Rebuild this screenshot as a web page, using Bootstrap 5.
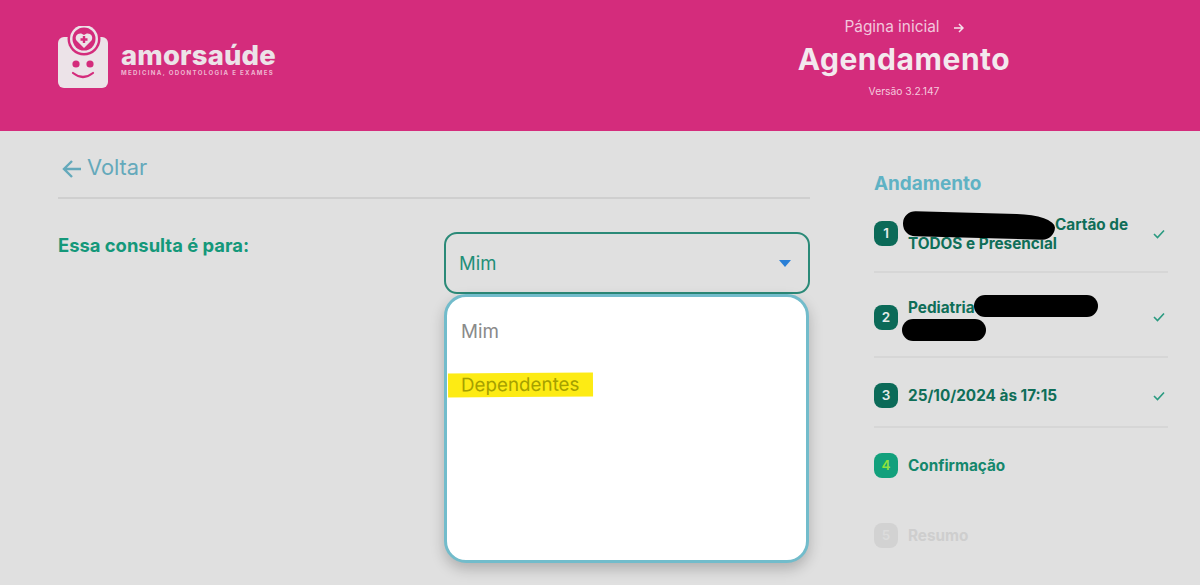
<!DOCTYPE html>
<html lang="pt-BR"><head><meta charset="utf-8">
<link href="https://cdn.jsdelivr.net/npm/bootstrap@5.3.0/dist/css/bootstrap.min.css" rel="stylesheet">
<style>
html,body{height:585px;overflow:hidden}
body{background:#e0e0e0;font-family:Inter,"Noto Sans",sans-serif}
.topbar{background:#d42c7c;height:131px;color:#f0e4ea}
.brand{margin-left:58px;width:240px;padding-top:26px}
.brand-txt{margin-left:11px}
.brand-name{font-weight:800;font-size:27.4px;line-height:26px;letter-spacing:.2px;color:#ece3e8;margin-top:16px}
.brand-sub{font-size:6.1px;font-weight:700;letter-spacing:1.35px;line-height:8px;color:#eeb6d0;white-space:nowrap;margin-top:1px}
.head-center{width:240px;margin-left:486px;padding-top:18px;text-align:center}
.home-link{font-size:15.4px;line-height:18px;color:#f2c7dc}
.home-link svg{margin-left:13px}
.page-title{font-size:30px;font-weight:700;letter-spacing:.55px;line-height:34px;margin:6px 0 0;color:#f3e9ee}
.ver{font-size:10.3px;line-height:14px;margin-top:8px;color:#f4c9dd}
.left-col{margin-left:58px;width:752px}
.back{height:68px;border-bottom:2px solid #cfcfcf;color:#64a9bb;font-size:21.8px;padding:21px 0 0 4px;line-height:30px}
.back svg{margin-right:5px}
.q-row{padding-top:33px}
.q-label{width:386px;font-size:18.4px;font-weight:700;color:#14987a;line-height:26px}
.sel-wrap{width:366px}
.sel{height:62px;border:2px solid #2b8a78;border-radius:13px;padding:1px 17px 0 13px;color:#1f8f78;font-size:18.5px}
.caret-tri{width:0;height:0;border-left:6.5px solid transparent;border-right:6.5px solid transparent;border-top:7px solid #2a7fd6}
.sel-menu{position:absolute;left:0;top:0;width:365px;height:269px;background:#fff;border:3px solid #72bccb;border-radius:22px;box-shadow:0 6px 14px rgba(0,0,0,.22);z-index:5;padding:23px 14px;font-size:18.8px;color:#8a8a8a}
.opt-first{line-height:24px}
.opt-hl{display:inline-block;background:#fdeb14;color:#a5a000;margin:29px 0 0 -13px;padding:0 14px 0 13px;line-height:24px;transform:rotate(-.4deg)}
.side{margin-left:64px;width:294px;padding-top:41px}
.side-title{font-size:18.9px;font-weight:700;color:#5fb2c4;line-height:24px}
.step{color:#0f6e58;font-size:15.3px;font-weight:700;line-height:19px;border-bottom:2px solid #d6d6d6;position:relative}
.step.s1{height:77px}
.step.s2{height:85px;padding-top:5px}
.step.s3{height:70px;padding-top:7px}
.step.s4{height:70px;padding-top:4px;border:0;color:#14876c}
.step.s5{height:70px;padding-top:4px;border:0;color:#cecece}
.num{flex:0 0 24px;width:24px;height:25px;border-radius:8px;background:#0b6a58;color:#e6ecea;font-size:13.5px;font-weight:600;margin-right:10px;text-align:center;line-height:24px}
.step.s4 .num{background:#12a07c;color:#8fe03c}
.step.s5 .num{background:#d2d2d2;color:#dcdcdc}
.step-txt{flex:1}
.tick{margin:0 3px 0 7px;flex:none}
.blob{position:absolute;background:#000;z-index:3}
.b1{left:29px;top:17px;width:152px;height:25px;border-radius:13px 40px 13px 13px/12px 13px 13px 13px;transform:rotate(1.5deg)}
.b2{left:100px;top:22px;width:124px;height:22px;border-radius:11px}
.b3{left:28px;top:46px;width:84px;height:22px;border-radius:11px}
.gap-a{display:inline-block;width:147px}
.gap-b{display:inline-block;width:124px}
</style></head><body>
<header class="topbar d-flex">
 <div class="brand d-flex">
  <svg width="52" height="64" viewBox="0 0 52 64" class="flex-none" aria-hidden="true">
   <rect x="0" y="11" width="50" height="51" rx="6" fill="#ece3e8"/>
   <circle cx="26" cy="13" r="16.5" fill="#d42c7c"/>
   <circle cx="26" cy="13" r="14" fill="#ece3e8"/>
   <circle cx="26" cy="13" r="11.5" fill="#d42c7c"/>
   <path d="M26 22 L18.5 14.5 C15.5 9 22 5 26 9 C30 5 36.5 9 33.5 14.5Z" fill="#ece3e8"/>
   <path d="M24.8 10h2.4v2.3h2.3v2.4h-2.3v2.3h-2.4v-2.3h-2.3v-2.4h2.3z" fill="#d42c7c"/>
   <circle cx="18" cy="38" r="3.6" fill="#d42c7c"/><circle cx="32" cy="38" r="3.6" fill="#d42c7c"/>
   <path d="M15 47 Q25 55 35 47" fill="none" stroke="#d42c7c" stroke-width="2.2" stroke-linecap="round"/>
  </svg>
  <div class="brand-txt">
   <div class="brand-name">amorsaúde</div>
   <div class="brand-sub">MEDICINA, ODONTOLOGIA E EXAMES</div>
  </div>
 </div>
 <div class="head-center">
  <div class="home-link">Página inicial<svg width="11" height="10" viewBox="0 0 11 10" aria-hidden="true"><path d="M1 5h9M6 1l4 4-4 4" fill="none" stroke="#f5e3ec" stroke-width="1.5"/></svg></div>
  <h1 class="page-title">Agendamento</h1>
  <div class="ver">Versão 3.2.147</div>
 </div>
</header>
<main class="d-flex">
 <section class="left-col">
  <div class="back"><svg width="20" height="20" viewBox="0 0 20 20" aria-hidden="true"><path d="M19 10H2M10 2l-8 8 8 8" fill="none" stroke="#64a9bb" stroke-width="2.4"/></svg>Voltar</div>
  <div class="q-row d-flex">
   <div class="q-label">Essa consulta é para:</div>
   <div class="sel-wrap">
    <div class="sel d-flex align-items-center justify-content-between"><span>Mim</span><span class="caret-tri"></span></div>
    <div class="position-relative"><div class="sel-menu">
      <div class="opt-first">Mim</div>
      <div class="opt-hl">Dependentes</div>
    </div></div>
   </div>
  </div>
 </section>
 <aside class="side">
  <div class="side-title">Andamento</div>
  <div class="step s1 d-flex align-items-center">
   <span class="num">1</span><div class="step-txt"><span class="gap-a"></span>Cartão de TODOS e Presencial</div>
   <svg class="tick" width="12" height="10" viewBox="0 0 12 10" aria-hidden="true"><path d="M1 5l3.5 3.5L11 1.5" fill="none" stroke="#2a9a80" stroke-width="1.6"/></svg>
   <span class="blob b1"></span>
  </div>
  <div class="step s2 d-flex align-items-center">
   <span class="num">2</span><div class="step-txt">Pediatria<span class="gap-b"></span><br>&nbsp;</div>
   <svg class="tick" width="12" height="10" viewBox="0 0 12 10" aria-hidden="true"><path d="M1 5l3.5 3.5L11 1.5" fill="none" stroke="#2a9a80" stroke-width="1.6"/></svg>
   <span class="blob b2"></span><span class="blob b3"></span>
  </div>
  <div class="step s3 d-flex align-items-center">
   <span class="num">3</span><div class="step-txt">25/10/2024 às 17:15</div>
   <svg class="tick" width="12" height="10" viewBox="0 0 12 10" aria-hidden="true"><path d="M1 5l3.5 3.5L11 1.5" fill="none" stroke="#2a9a80" stroke-width="1.6"/></svg>
  </div>
  <div class="step s4 d-flex align-items-center"><span class="num">4</span><div class="step-txt">Confirmação</div></div>
  <div class="step s5 d-flex align-items-center"><span class="num">5</span><div class="step-txt">Resumo</div></div>
 </aside>
</main>
</body></html>
